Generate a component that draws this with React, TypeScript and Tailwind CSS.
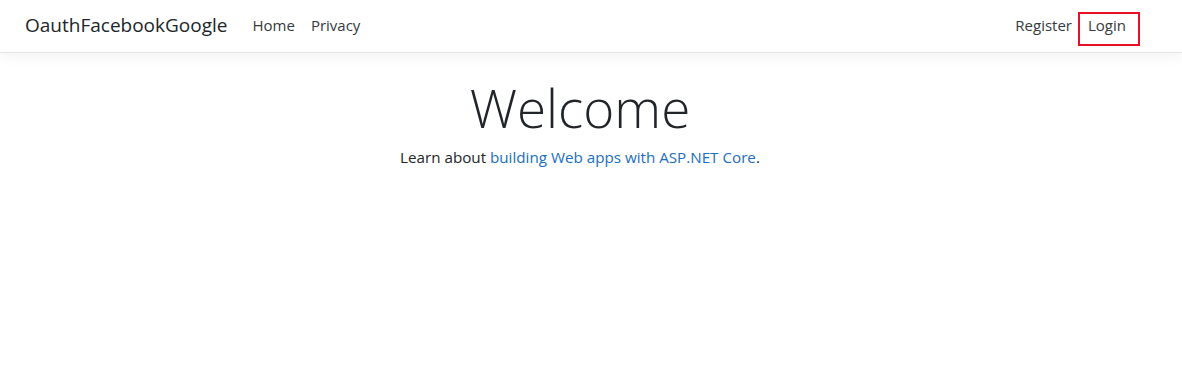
export default function App() {
  return (
    <div className="min-h-[381px] bg-white font-['Open_Sans',sans-serif] text-[#212529]">
      <header className="flex h-[53px] items-center border-b border-[#e5e5e5] bg-white pl-[25px] pr-[42px] shadow-[0_4px_12px_rgba(0,0,0,0.05)]">
        <a className="mr-[25px] pb-[1px] text-[19px] leading-none text-[#212529]">OauthFacebookGoogle</a>
        <nav className="flex flex-1 items-center gap-[16px] pb-[2px] text-[15px] text-[#343a40]">
          <a>Home</a>
          <a>Privacy</a>
        </nav>
        <nav className="flex items-center gap-[4px] text-[15px] text-[#343a40]">
          <a className="pb-[2px] pr-[2px]">Register</a>
          <a className="mt-[6px] flex h-[34px] w-[62px] items-center justify-center border-2 border-[#e81123] pb-[8px] pr-[4px]">Login</a>
        </nav>
      </header>
      <main className="pr-[22px] pt-[21px] text-center">
        <h1 className="text-[53px] font-light leading-[68px] text-[#212529]">Welcome</h1>
        <p className="mt-[4px] text-[15.2px]">
          Learn about <a className="text-[#1b6ec2]">building Web apps with ASP.NET Core</a>.
        </p>
      </main>
    </div>
  )
}
